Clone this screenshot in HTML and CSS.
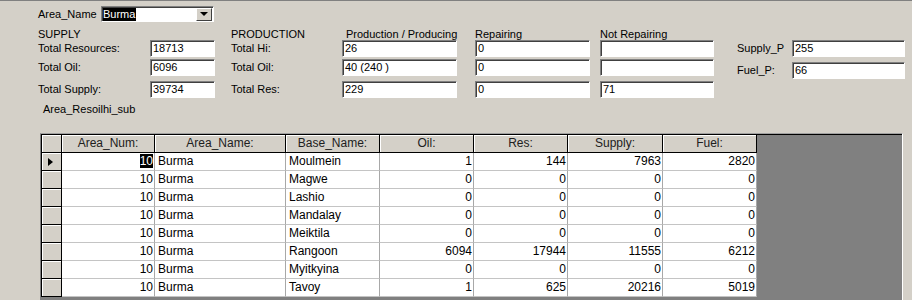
FILE: index.html
```html
<!DOCTYPE html>
<html>
<head>
	<title>Area_Resoilhi</title>
	<link rel="stylesheet" href="styles.css">
</head>
<body>
	<div class="form">
		<div class="area-row">
			<span class="area-label">Area_Name</span>
			<div class="combo">
				<span class="sel">Burma</span>
				<span class="drop"><span class="arrow"></span></span>
			</div>
		</div>

		<div class="top">
			<div class="col c-lab">
				<span class="head">SUPPLY</span>
				<span class="lab">Total Resources:</span>
				<span class="lab">Total Oil:</span>
				<span class="lab">Total Supply:</span>
			</div>
			<div class="col c-sup">
				<span class="head"></span>
				<span class="box">18713</span>
				<span class="box">6096</span>
				<span class="box">39734</span>
			</div>
			<div class="col c-plab">
				<span class="head">PRODUCTION</span>
				<span class="lab">Total Hi:</span>
				<span class="lab">Total Oil:</span>
				<span class="lab">Total Res:</span>
			</div>
			<div class="col c-prod">
				<span class="head indent">Production / Producing</span>
				<span class="box">26</span>
				<span class="box">40 (240 )</span>
				<span class="box">229</span>
			</div>
			<div class="col c-rep">
				<span class="head">Repairing</span>
				<span class="box">0</span>
				<span class="box">0</span>
				<span class="box">0</span>
			</div>
			<div class="col c-not">
				<span class="head">Not Repairing</span>
				<span class="box"></span>
				<span class="box"></span>
				<span class="box">71</span>
			</div>
			<div class="side">
				<span class="head"></span>
				<span class="head"></span>
				<span class="lab">Supply_P</span>
				<span class="box">255</span>
				<span class="lab">Fuel_P:</span>
				<span class="box">66</span>
			</div>
		</div>

		<div class="sub-label">Area_Resoilhi_sub</div>

		<div class="subform">
			<div class="sheet">
				<div class="hd"></div>
				<div class="hd">Area_Num:</div>
				<div class="hd">Area_Name:</div>
				<div class="hd">Base_Name:</div>
				<div class="hd">Oil:</div>
				<div class="hd">Res:</div>
				<div class="hd">Supply:</div>
				<div class="hd">Fuel:</div>

				<div class="rs"><span class="cur"></span></div>
				<div class="c num"><span class="hl">10</span></div>
				<div class="c">Burma</div>
				<div class="c">Moulmein</div>
				<div class="c num">1</div>
				<div class="c num">144</div>
				<div class="c num">7963</div>
				<div class="c num">2820</div>

				<div class="rs"></div>
				<div class="c num">10</div>
				<div class="c">Burma</div>
				<div class="c">Magwe</div>
				<div class="c num">0</div>
				<div class="c num">0</div>
				<div class="c num">0</div>
				<div class="c num">0</div>

				<div class="rs"></div>
				<div class="c num">10</div>
				<div class="c">Burma</div>
				<div class="c">Lashio</div>
				<div class="c num">0</div>
				<div class="c num">0</div>
				<div class="c num">0</div>
				<div class="c num">0</div>

				<div class="rs"></div>
				<div class="c num">10</div>
				<div class="c">Burma</div>
				<div class="c">Mandalay</div>
				<div class="c num">0</div>
				<div class="c num">0</div>
				<div class="c num">0</div>
				<div class="c num">0</div>

				<div class="rs"></div>
				<div class="c num">10</div>
				<div class="c">Burma</div>
				<div class="c">Meiktila</div>
				<div class="c num">0</div>
				<div class="c num">0</div>
				<div class="c num">0</div>
				<div class="c num">0</div>

				<div class="rs"></div>
				<div class="c num">10</div>
				<div class="c">Burma</div>
				<div class="c">Rangoon</div>
				<div class="c num">6094</div>
				<div class="c num">17944</div>
				<div class="c num">11555</div>
				<div class="c num">6212</div>

				<div class="rs"></div>
				<div class="c num">10</div>
				<div class="c">Burma</div>
				<div class="c">Myitkyina</div>
				<div class="c num">0</div>
				<div class="c num">0</div>
				<div class="c num">0</div>
				<div class="c num">0</div>

				<div class="rs"></div>
				<div class="c num">10</div>
				<div class="c">Burma</div>
				<div class="c">Tavoy</div>
				<div class="c num">1</div>
				<div class="c num">625</div>
				<div class="c num">20216</div>
				<div class="c num">5019</div>
			</div>
		</div>
	</div>
</body>
</html>
```

FILE: styles.css
```css
body {
	margin: 0;
	background: #d4d0c8;
	font-family: 'Liberation Sans', Arial, sans-serif;
	font-size: 11px;
	color: #000;
	overflow: hidden;
}

.form {
	border-top: 1px solid #808080;
	padding-left: 38px;
	height: 299px;
	overflow: hidden;
}

/* area picker */
.area-row {
	display: flex;
	align-items: center;
	margin-top: 5px;
	height: 16px;
}

.area-label {
	width: 63px;
}

.combo {
	display: flex;
	align-items: center;
	box-sizing: border-box;
	width: 113px;
	height: 16px;
	background: #fff;
	border: 1px solid;
	border-color: #808080 #fff #fff #808080;
	box-shadow: inset 1px 1px 0 #404040;
	padding-left: 1px;
}

.sel {
	background: #000;
	color: #fff;
	line-height: 13px;
	padding-right: 1px;
}

.drop {
	margin-left: auto;
	margin-right: 1px;
	box-sizing: border-box;
	width: 16px;
	height: 13px;
	background: #d4d0c8;
	border: 1px solid;
	border-color: #fff #404040 #404040 #fff;
	display: flex;
	align-items: center;
	justify-content: center;
}

.arrow {
	width: 0;
	height: 0;
	border-left: 4px solid transparent;
	border-right: 4px solid transparent;
	border-top: 4px solid #000;
}

/* totals */
.top {
	display: flex;
	margin-top: 6px;
}

.col {
	display: grid;
	grid-template-rows: 12px 19px 22px 17px;
}

.head {
	line-height: 12px;
	white-space: nowrap;
}

.head.indent {
	padding-left: 4px;
}

.lab {
	line-height: 16px;
	white-space: nowrap;
}

.box {
	box-sizing: border-box;
	height: 17px;
	line-height: 15px;
	background: #fff;
	border: 1px solid;
	border-color: #808080 #fff #fff #808080;
	box-shadow: inset 1px 1px 0 #404040;
	padding-left: 2px;
	white-space: nowrap;
}

.c-lab { width: 112px; }
.c-sup { width: 65px; }
.c-plab { width: 111px; margin-left: 16px; }
.c-prod { width: 115px; }
.c-rep { width: 115px; margin-left: 18px; }
.c-not { width: 114px; margin-left: 10px; }

.side {
	display: grid;
	grid-template-columns: 55px 113px;
	grid-template-rows: 12px 22px 17px;
	margin-left: 23px;
}

.sub-label {
	margin-top: 5px;
	padding-left: 5px;
	line-height: 12px;
}

/* datasheet */
.subform {
	margin-top: 18px;
	margin-left: 2px;
	box-sizing: border-box;
	width: 863px;
	height: 170px;
	background: #808080;
	border-top: 1px solid #a0a0a0;
	border-left: 1px solid #808080;
	border-right: 1px solid #fff;
}

.sheet {
	display: grid;
	grid-template-columns: 20px 93px 131px 94px 94px 94px 95px 94px;
	grid-auto-rows: 18px;
	border-top: 1px solid #000;
	border-left: 1px solid #000;
	font-size: 12px;
}

.hd {
	background: #d4d0c8;
	border-right: 1px solid #000;
	border-bottom: 1px solid #000;
	box-shadow: inset 1px 1px 0 #fff;
	text-align: center;
	line-height: 17px;
	color: #202020;
}

.rs {
	background: #d4d0c8;
	border-right: 1px solid #000;
	border-bottom: 1px solid #000;
	box-shadow: inset 1px 1px 0 #fff;
	display: flex;
	align-items: center;
	padding-left: 6px;
}

.cur {
	width: 0;
	height: 0;
	border-top: 4px solid transparent;
	border-bottom: 4px solid transparent;
	border-left: 5px solid #000;
}

.c {
	background: #fff;
	border-right: 1px solid #a8a8a8;
	border-bottom: 1px solid #c4c4c4;
	line-height: 17px;
	padding-left: 3px;
	white-space: nowrap;
	overflow: hidden;
}

.c.num {
	text-align: right;
	padding-left: 0;
	padding-right: 1px;
}

.hl {
	background: #000;
	color: #fff;
}
```
